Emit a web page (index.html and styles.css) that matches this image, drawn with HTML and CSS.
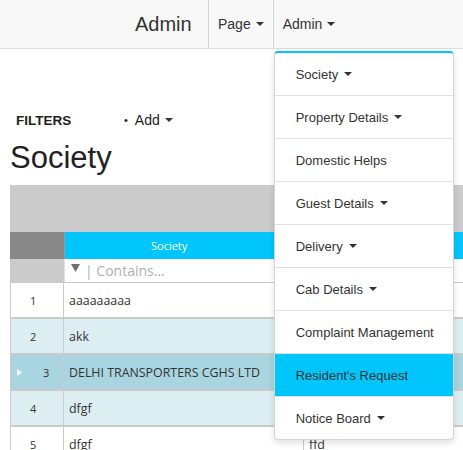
FILE: index.html
```html
<!DOCTYPE html>
<html>
<head>
<meta charset="utf-8">
<title>Admin</title>
<link rel="stylesheet" href="styles.css">
</head>
<body>
<nav class="navbar">
  <div class="brand">Admin</div>
  <ul class="nav">
    <li class="nav-item"><span>Page</span><span class="caret"></span></li>
    <li class="nav-item open"><span>Admin</span><span class="caret"></span>
      <ul class="dropdown">
        <li>Society<span class="caret"></span></li>
        <li>Property Details<span class="caret"></span></li>
        <li>Domestic Helps</li>
        <li>Guest Details<span class="caret"></span></li>
        <li>Delivery<span class="caret"></span></li>
        <li>Cab Details<span class="caret"></span></li>
        <li>Complaint Management</li>
        <li class="active">Resident's Request</li>
        <li>Notice Board<span class="caret"></span></li>
      </ul>
    </li>
  </ul>
</nav>
<main class="page">
  <div class="toolbar">
    <span class="filters">FILTERS</span>
    <span class="add"><span class="bullet">•</span>Add<span class="caret"></span></span>
  </div>
  <h1 class="title">Society</h1>
  <div class="grid">
    <div class="group-panel"></div>
    <div class="head-row">
      <div class="c-num"></div>
      <div class="c-soc">Society</div>
      <div class="c-rest"></div>
    </div>
    <div class="filter-row">
      <div class="c-num"></div>
      <div class="c-soc filter-cell">
        <svg class="funnel" width="9" height="8" viewBox="0 0 9 8"><path d="M0 0H9L4.5 8Z" fill="#6f6f6f"/></svg>
        <span class="placeholder">| Contains...</span>
      </div>
      <div class="c-rest"></div>
    </div>
    <div class="row">
      <div class="c-num">1</div><div class="c-soc">aaaaaaaaa</div><div class="c-rest"></div>
    </div>
    <div class="row alt">
      <div class="c-num">2</div><div class="c-soc">akk</div><div class="c-rest"></div>
    </div>
    <div class="row selected">
      <div class="c-num"><svg class="indicator" width="5" height="7" viewBox="0 0 5 7"><path d="M0 0L5 3.5L0 7Z" fill="#fff"/></svg><span class="sel-num">3</span></div><div class="c-soc">DELHI TRANSPORTERS CGHS LTD</div><div class="c-rest"></div>
    </div>
    <div class="row alt">
      <div class="c-num">4</div><div class="c-soc">dfgf</div><div class="c-rest"></div>
    </div>
    <div class="row">
      <div class="c-num">5</div><div class="c-soc">dfgf</div><div class="c-rest">ffd</div>
    </div>
  </div>
</main>
</body>
</html>
```

FILE: styles.css
```css
html, body {
  margin: 0;
  padding: 0;
  background: #fff;
  overflow: hidden;
}
body {
  font-family: "Liberation Sans", Arial, sans-serif;
  color: #333;
  width: 463px;
  height: 450px;
}

/* navbar */
.navbar {
  display: flex;
  height: 48px;
  background: #f8f8f8;
  border-bottom: 1px solid #dcdcdc;
  padding-left: 135px;
  position: relative;
  z-index: 10;
}
.brand {
  font-size: 20px;
  line-height: 48px;
  width: 73px;
  color: #333;
}
.nav {
  display: flex;
  margin: 0;
  padding: 0;
  list-style: none;
}
.nav-item {
  position: relative;
  display: flex;
  align-items: center;
  height: 48px;
  padding: 0 9px;
  border-left: 1px solid #d2d2d2;
  font-size: 14px;
  color: #333;
}
.caret {
  display: inline-block;
  width: 0;
  height: 0;
  margin-left: 5px;
  border-top: 4px solid #333;
  border-left: 4px solid transparent;
  border-right: 4px solid transparent;
  vertical-align: middle;
}

/* dropdown */
.dropdown {
  position: absolute;
  top: 51px;
  left: 0;
  width: 180px;
  box-sizing: border-box;
  margin: 0;
  padding: 0;
  list-style: none;
  background: #fff;
  border: 1px solid #d4d4d4;
  border-top: 2px solid #00c6fc;
  border-radius: 4px;
  box-shadow: 0 3px 6px rgba(0, 0, 0, 0.12);
  overflow: hidden;
}
.dropdown li {
  display: flex;
  align-items: center;
  height: 42px;
  padding-left: 21px;
  border-bottom: 1px solid #e2e2e2;
  font-size: 13px;
  color: #333;
}
.dropdown li .caret {
  margin-left: 6px;
}
.dropdown li:last-child {
  border-bottom: none;
}
.dropdown li.active {
  background: #00c6fc;
}

/* page */
.page {
  padding: 0 10px;
}
.toolbar {
  display: flex;
  align-items: center;
  margin-top: 61px;
  height: 20px;
  padding-left: 6px;
  font-size: 14px;
}
.filters {
  width: 108px;
  font-weight: bold;
  font-size: 13.5px;
  color: #222;
}
.add {
  display: flex;
  align-items: center;
  color: #222;
}
.bullet {
  font-size: 11px;
  margin-right: 7px;
}
.title {
  margin: 10px 0 0;
  font-size: 31px;
  line-height: 36px;
  font-weight: normal;
  color: #222;
}

/* grid */
.grid {
  margin-top: 9px;
  width: 600px;
  font-family: "Open Sans", "Noto Sans", sans-serif;
}
.group-panel {
  height: 47px;
  background: #cbcbcb;
}
.head-row,
.filter-row,
.row {
  display: flex;
}
.head-row {
  height: 27px;
}
.head-row .c-num {
  width: 54px;
  background: #888;
  border-right: 1px solid #9a9a9a;
}
.head-row .c-soc {
  width: 240px;
  background: #00c6fc;
  color: #fff;
  font-size: 11px;
  line-height: 27px;
  padding-left: 86px;
  box-sizing: border-box;
}
.head-row .c-rest {
  flex: 1;
  background: #00c6fc;
}
.filter-row {
  height: 23px;
  border-bottom: 1px solid #c8c8c8;
}
.filter-row .c-num {
  width: 54px;
  background: #cbcbcb;
  border-right: 1px solid #e0e0e0;
}
.filter-cell {
  width: 240px;
  display: flex;
  align-items: center;
  padding-left: 6px;
  box-sizing: border-box;
  border-right: 1px solid #d0d0d0;
}
.funnel {
  margin-top: -6px;
  margin-right: 5px;
}
.placeholder {
  font-size: 14px;
  color: #b0b0b0;
}
.filter-row .c-rest {
  flex: 1;
}

.row {
  height: 34px;
  border-left: 1px solid #cbcbcb;
  border-bottom: 2px solid #cbcbcb;
  background: #fff;
  font-size: 12.4px;
  color: #333;
}
.row.alt {
  background: #ddeef3;
}
.row.selected {
  background: #a9d5e0;
}
.row .c-num {
  width: 53px;
  box-sizing: border-box;
  border-right: 1px solid #cbcbcb;
  display: flex;
  align-items: center;
  padding-left: 19px;
  font-size: 11px;
}
.row.selected .c-num {
  padding-left: 6px;
}
.indicator {
  flex: none;
}
.sel-num {
  margin-left: 21px;
}
.row .c-soc {
  width: 240px;
  box-sizing: border-box;
  border-right: 1px solid #cbcbcb;
  display: flex;
  align-items: center;
  padding-left: 5px;
}
.row .c-rest {
  flex: 1;
  display: flex;
  align-items: center;
  padding-left: 5px;
}
```
